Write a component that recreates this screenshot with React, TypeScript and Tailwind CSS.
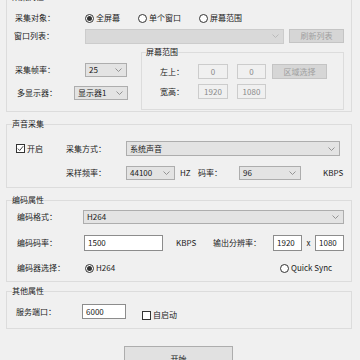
import type { ReactNode } from 'react';

function Chevron({ color = '#8a8a8a' }: { color?: string }) {
  return (
    <svg width="7" height="4" viewBox="0 0 7 4" className="shrink-0">
      <polyline points="0.5,0.5 3.5,3.5 6.5,0.5" fill="none" stroke={color} strokeWidth="0.9" />
    </svg>
  );
}

function Combo({ value = '', className = '', disabled = false }: { value?: string; className?: string; disabled?: boolean }) {
  return (
    <div
      className={`flex items-center justify-between pl-[3px] pr-[4px] border ${
        disabled ? 'bg-[#d9d9d9] border-[#cccccc] text-[#a0a0a0]' : 'bg-[#e3e3e3] border-[#adadad] text-[#1a1a1a]'
      } ${className}`}
    >
      <span className="leading-none">{value}</span>
      <Chevron color={disabled ? '#b8b8b8' : '#8a8a8a'} />
    </div>
  );
}

function TextBox({ value, className = '', disabled = false }: { value: string; className?: string; disabled?: boolean }) {
  return (
    <div
      className={`flex items-center border leading-none ${
        disabled
          ? 'bg-[#f0f0f0] border-[#cccccc] text-[#8a8a8a] justify-center'
          : 'bg-white border-[#8c8c8c] text-[#1a1a1a] pl-[3px]'
      } ${className}`}
    >
      {value}
    </div>
  );
}

function Btn({ label, className = '', disabled = false }: { label: string; className?: string; disabled?: boolean }) {
  return (
    <div
      className={`flex items-center justify-center border leading-none ${
        disabled ? 'bg-[#d6d6d6] border-[#c4c4c4] text-[#a0a0a0]' : 'bg-[#e1e1e1] border-[#adadad] text-[#1a1a1a]'
      } ${className}`}
    >
      {label}
    </div>
  );
}

function Radio({ label, checked = false, className = '' }: { label: string; checked?: boolean; className?: string }) {
  return (
    <div className={`flex items-center gap-[2px] ${className}`}>
      <span className="flex items-center justify-center w-[9px] h-[9px] rounded-full border border-[#333] bg-white">
        {checked && <span className="w-[5px] h-[5px] rounded-full bg-[#333]" />}
      </span>
      <span className="leading-none">{label}</span>
    </div>
  );
}

function Check({ label, checked = false, className = '' }: { label: string; checked?: boolean; className?: string }) {
  return (
    <div className={`flex items-center gap-[2px] ${className}`}>
      <span className="flex items-center justify-center w-[9px] h-[9px] border border-[#333] bg-white">
        {checked && (
          <svg width="7" height="7" viewBox="0 0 7 7">
            <polyline points="0.8,3.6 2.7,5.5 6.2,1.2" fill="none" stroke="#333" strokeWidth="0.9" />
          </svg>
        )}
      </span>
      <span className="leading-none">{label}</span>
    </div>
  );
}

function Group({ title, className = '', children }: { title: string; className?: string; children: ReactNode }) {
  return (
    <div className={`relative ml-[6px] w-[346px] border border-[#dcdcdc] ${className}`}>
      <span className="absolute left-[5px] top-[-6px] bg-[#f0f0f0] leading-[10px] text-[#1a1a1a]">{title}</span>
      {children}
    </div>
  );
}

export default function App() {
  return (
    <div className="w-[360px] h-[360px] overflow-hidden bg-[#f0f0f0] text-[8px] text-[#222] font-['Noto_Sans_CJK_SC','Noto_Sans',sans-serif]">
      <Group title="采集属性" className="mt-[-3px] h-[115px]">
        <div className="flex items-center h-[14px] mt-[13px] pl-[8px]">
          <span className="w-[70px]">采集对象：</span>
          <Radio label="全屏幕" checked className="w-[53px]" />
          <Radio label="单个窗口" className="w-[61px]" />
          <Radio label="屏幕范围" />
        </div>
        <div className="flex items-center h-[16px] mt-[3px] pl-[7px]">
          <span className="w-[71px]">窗口列表：</span>
          <Combo disabled className="w-[199px] h-[15px]" />
          <Btn label="刷新列表" disabled className="ml-[5px] w-[55px] h-[14px]" />
        </div>
        <div className="flex mt-[8px]">
          <div className="w-[134px]">
            <div className="flex items-center h-[14px] mt-[11px] pl-[8px]">
              <span className="w-[70px]">采集帧率：</span>
              <Combo value="25" className="w-[42px] h-[14px]" />
            </div>
            <div className="flex items-center h-[14px] mt-[9px] pl-[10px]">
              <span className="w-[57px]">多显示器：</span>
              <Combo value="显示器1" className="w-[54px] h-[14px]" />
            </div>
          </div>
          <div className="relative w-[203px] h-[58px] border border-[#dcdcdc]">
            <span className="absolute left-[4px] top-[-6px] bg-[#f0f0f0] leading-[10px] text-[#1a1a1a]">屏幕范围</span>
            <div className="flex items-center h-[15px] mt-[11px] pl-[18px]">
              <span className="w-[38px]">左上：</span>
              <TextBox value="0" disabled className="w-[30px] h-[15px]" />
              <TextBox value="0" disabled className="ml-[9px] w-[29px] h-[15px]" />
              <Btn label="区域选择" disabled className="ml-[6px] w-[55px] h-[15px]" />
            </div>
            <div className="flex items-center h-[15px] mt-[5px] pl-[18px]">
              <span className="w-[38px]">宽高：</span>
              <TextBox value="1920" disabled className="w-[30px] h-[15px]" />
              <TextBox value="1080" disabled className="ml-[9px] w-[29px] h-[15px]" />
            </div>
          </div>
        </div>
      </Group>

      <Group title="声音采集" className="mt-[12px] h-[64px]">
        <div className="flex items-center h-[15px] mt-[16px] pl-[9px]">
          <Check label="开启" checked className="w-[50px]" />
          <span className="w-[60px]">采集方式：</span>
          <Combo value="系统声音" className="w-[214px] h-[15px]" />
        </div>
        <div className="flex items-center h-[14px] mt-[10px] pl-[59px]">
          <span className="w-[60px]">采样频率：</span>
          <Combo value="44100" className="w-[49px] h-[14px]" />
          <span className="ml-[5px] w-[18px]">HZ</span>
          <span className="w-[41px]">码率：</span>
          <Combo value="96" className="w-[62px] h-[14px]" />
          <span className="ml-[22px]">KBPS</span>
        </div>
      </Group>

      <Group title="编码属性" className="mt-[12px] h-[82px]">
        <div className="flex items-center h-[14px] mt-[9px] pl-[10px]">
          <span className="w-[66px]">编码格式：</span>
          <Combo value="H264" className="w-[261px] h-[14px]" />
        </div>
        <div className="flex items-center h-[16px] mt-[11px] pl-[10px]">
          <span className="w-[67px]">编码码率：</span>
          <TextBox value="1500" className="w-[79px] h-[16px]" />
          <span className="ml-[13px] w-[37px]">KBPS</span>
          <span className="w-[60px]">输出分辨率：</span>
          <TextBox value="1920" className="w-[29px] h-[16px]" />
          <span className="w-[13px] text-center">x</span>
          <TextBox value="1080" className="w-[29px] h-[16px]" />
        </div>
        <div className="flex items-center h-[12px] mt-[11px] pl-[10px]">
          <span className="w-[68px]">编码器选择：</span>
          <Radio label="H264" checked className="w-[195px]" />
          <Radio label="Quick Sync" />
        </div>
      </Group>

      <Group title="其他属性" className="mt-[9px] h-[38px]">
        <div className="flex items-center h-[15px] mt-[12px] pl-[9px]">
          <span className="w-[66px]">服务端口：</span>
          <TextBox value="6000" className="w-[44px] h-[15px]" />
          <Check label="自启动" className="ml-[16px] mt-[7px]" />
        </div>
      </Group>

      <Btn label="开始" className="mt-[17px] ml-[124px] w-[109px] h-[25px]" />
    </div>
  );
}
